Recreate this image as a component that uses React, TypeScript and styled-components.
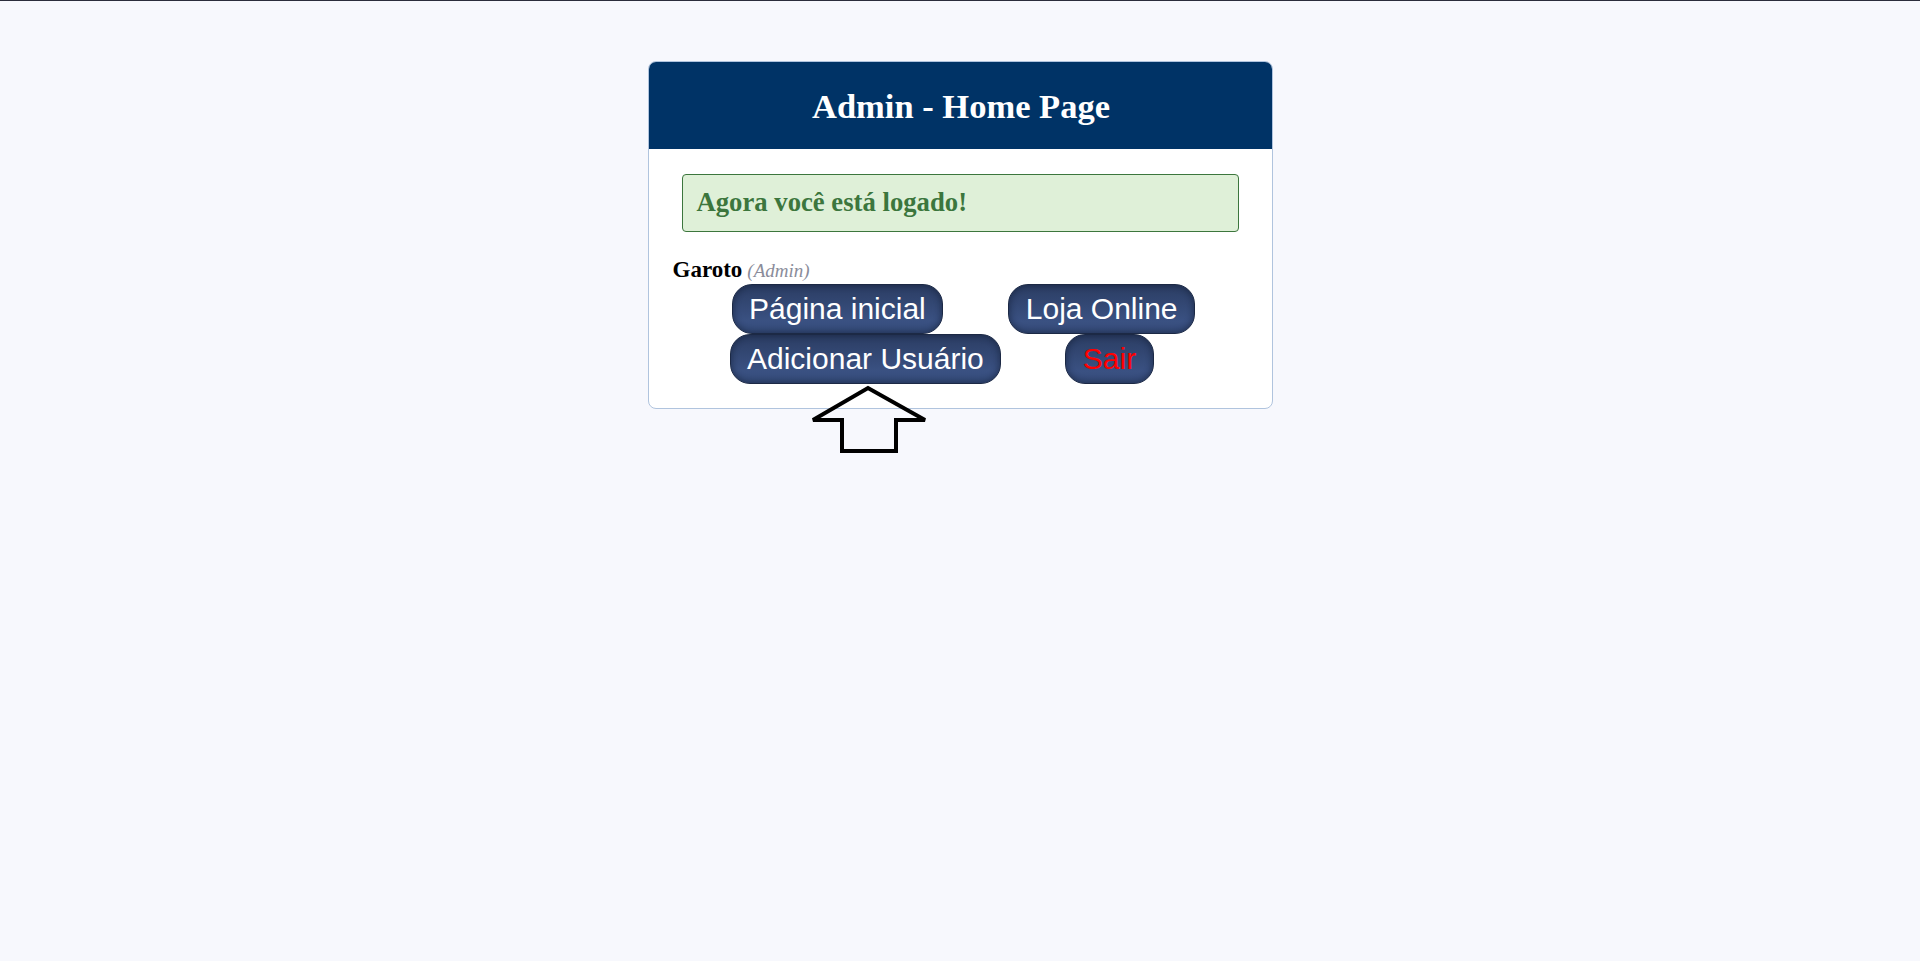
import React from "react";
import styled, { createGlobalStyle } from "styled-components";

const GlobalStyle = createGlobalStyle`
  html, body {
    margin: 0;
    padding: 0;
    background: #f7f8fd;
  }
  body {
    border-top: 1px solid #2b2d3c;
    min-height: 960px;
    font-family: "Liberation Serif", "Times New Roman", serif;
  }
`;

const Page = styled.div`
  display: flex;
  justify-content: center;
  padding-top: 60px;
`;

const Card = styled.div`
  position: relative;
  width: 625px;
  box-sizing: border-box;
  background: #ffffff;
  border: 1px solid #b0c4de;
  border-radius: 8px;
`;

const Header = styled.div`
  height: 87px;
  background: #003366;
  border-radius: 7px 7px 0 0;
  display: flex;
  align-items: center;
  justify-content: center;
`;

const Title = styled.h1`
  margin: 0;
  padding-top: 1px;
  padding-left: 2px;
  color: #ffffff;
  font-family: "Liberation Serif", "Times New Roman", serif;
  font-weight: bold;
  font-size: 34.5px;
`;

const Body = styled.div`
  padding: 25px 24px 24px 24px;
`;

const Alert = styled.div`
  margin: 0 9px;
  padding: 13px 12px 14px 14px;
  background: #dff0d8;
  border: 1px solid #3c763d;
  border-radius: 4px;
  color: #3c763d;
  font-weight: bold;
  font-size: 26.7px;
  line-height: 29px;
`;

const UserLine = styled.div`
  margin-top: 25px;
  font-size: 23px;
  line-height: 25px;
  color: #000;
`;

const UserName = styled.b`
  font-weight: bold;
`;

const Role = styled.i`
  margin-left: 5px;
  font-size: 19px;
  color: #8a8c9a;
`;

const Buttons = styled.div`
  margin-top: 1px;
  display: flex;
  flex-direction: column;
`;

const ButtonRow = styled.div<{ $indent: number; $gap: number }>`
  display: flex;
  gap: ${(p) => p.$gap}px;
  margin-left: ${(p) => p.$indent}px;
`;

const NavButton = styled.button<{ $danger?: boolean }>`
  box-sizing: border-box;
  height: 50px;
  padding: 0 16.5px;
  border: 1px solid #1c2945;
  border-radius: 20px;
  background: linear-gradient(#2b3d63, #3a5182 75%, #344a78);
  box-shadow: inset 0 0 6px 1px rgba(12, 20, 40, 0.45);
  color: ${(p) => (p.$danger ? "#ff0000" : "#ffffff")};
  font-family: "Liberation Sans", Arial, sans-serif;
  font-size: 30px;
  line-height: 34px;
  cursor: pointer;
`;

const Arrow = styled.svg`
  position: absolute;
  left: 161px;
  top: 322px;
  overflow: visible;
`;

export default function App() {
  return (
    <>
      <GlobalStyle />
      <Page>
        <Card>
          <Header>
            <Title>Admin - Home Page</Title>
          </Header>
          <Body>
            <Alert>Agora você está logado!</Alert>
            <UserLine>
              <UserName>Garoto</UserName>
              <Role>(Admin)</Role>
            </UserLine>
            <Buttons>
              <ButtonRow $indent={59} $gap={65}>
                <NavButton>Página inicial</NavButton>
                <NavButton>Loja Online</NavButton>
              </ButtonRow>
              <ButtonRow $indent={57} $gap={64}>
                <NavButton>Adicionar Usuário</NavButton>
                <NavButton $danger>Sair</NavButton>
              </ButtonRow>
            </Buttons>
          </Body>
          <Arrow width="120" height="72" viewBox="0 0 120 72">
            <polygon
              points="3,36 32,36 32,67 86,67 86,36 115,36 58,4"
              fill="none"
              stroke="#000"
              strokeWidth="4"
              strokeLinejoin="miter"
              strokeMiterlimit="2.5"
            />
          </Arrow>
        </Card>
      </Page>
    </>
  );
}
